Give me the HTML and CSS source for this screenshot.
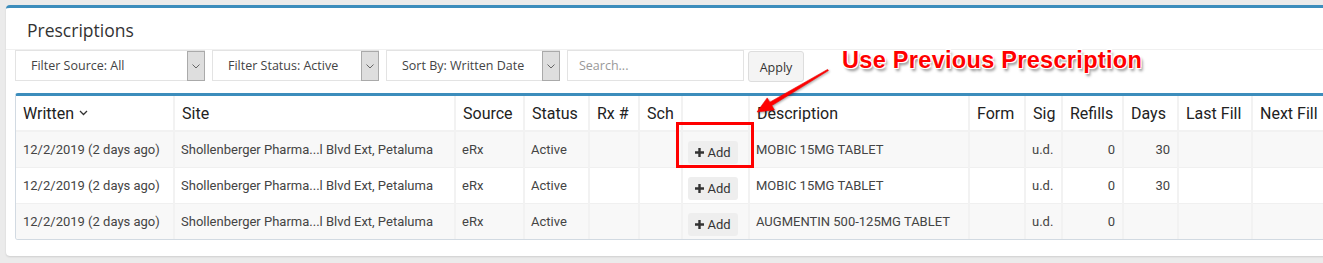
FILE: index.html
```html
<!DOCTYPE html>
<html lang="en">
<head>
  <meta charset="UTF-8">
  <title>Prescriptions</title>
  <link rel="stylesheet" href="styles.css">
</head>
<body>
  <div class="panel">
    <div class="panel-header">
      <h2>Prescriptions</h2>
    </div>

    <div class="toolbar">
      <div class="select select-source">
        <span class="select-text">Filter Source: All</span>
        <span class="select-btn"><svg width="8" height="5" viewBox="0 0 8 5"><path d="M0.5 0.5 L4 4 L7.5 0.5" fill="none" stroke="#666" stroke-width="1"/></svg></span>
      </div>
      <div class="select select-status">
        <span class="select-text">Filter Status: Active</span>
        <span class="select-btn"><svg width="8" height="5" viewBox="0 0 8 5"><path d="M0.5 0.5 L4 4 L7.5 0.5" fill="none" stroke="#666" stroke-width="1"/></svg></span>
      </div>
      <div class="select select-sort">
        <span class="select-text">Sort By: Written Date</span>
        <span class="select-btn"><svg width="8" height="5" viewBox="0 0 8 5"><path d="M0.5 0.5 L4 4 L7.5 0.5" fill="none" stroke="#666" stroke-width="1"/></svg></span>
      </div>
      <div class="search">Search...</div>
      <button class="apply">Apply</button>
    </div>

    <div class="grid">
      <table>
        <colgroup>
          <col style="width:158px"><col style="width:281px"><col style="width:69px"><col style="width:65px">
          <col style="width:50px"><col style="width:43px"><col style="width:67px"><col style="width:220px">
          <col style="width:56px"><col style="width:37px"><col style="width:61px"><col style="width:55px">
          <col style="width:74px"><col style="width:90px">
        </colgroup>
        <thead>
          <tr>
            <th>Written <svg class="sort" width="9" height="6" viewBox="0 0 9 6"><path d="M1 1 L4.5 4.5 L8 1" fill="none" stroke="#333" stroke-width="1.3"/></svg></th>
            <th>Site</th>
            <th>Source</th>
            <th>Status</th>
            <th>Rx #</th>
            <th>Sch</th>
            <th></th>
            <th>Description</th>
            <th>Form</th>
            <th>Sig</th>
            <th>Refills</th>
            <th>Days</th>
            <th>Last Fill</th>
            <th>Next Fill</th>
          </tr>
        </thead>
        <tbody>
          <tr>
            <td>12/2/2019 (2 days ago)</td>
            <td>Shollenberger Pharma...l Blvd Ext, Petaluma</td>
            <td>eRx</td>
            <td>Active</td>
            <td></td>
            <td></td>
            <td class="act"><button class="add"><svg width="9" height="9" viewBox="0 0 9 9"><path d="M3.3 0h2.4v3.3H9v2.4H5.7V9H3.3V5.7H0V3.3h3.3z" fill="#333"/></svg>Add</button></td>
            <td>MOBIC 15MG TABLET</td>
            <td></td>
            <td>u.d.</td>
            <td class="num">0</td>
            <td class="num">30</td>
            <td></td>
            <td></td>
          </tr>
          <tr>
            <td>12/2/2019 (2 days ago)</td>
            <td>Shollenberger Pharma...l Blvd Ext, Petaluma</td>
            <td>eRx</td>
            <td>Active</td>
            <td></td>
            <td></td>
            <td class="act"><button class="add"><svg width="9" height="9" viewBox="0 0 9 9"><path d="M3.3 0h2.4v3.3H9v2.4H5.7V9H3.3V5.7H0V3.3h3.3z" fill="#333"/></svg>Add</button></td>
            <td>MOBIC 15MG TABLET</td>
            <td></td>
            <td>u.d.</td>
            <td class="num">0</td>
            <td class="num">30</td>
            <td></td>
            <td></td>
          </tr>
          <tr>
            <td>12/2/2019 (2 days ago)</td>
            <td>Shollenberger Pharma...l Blvd Ext, Petaluma</td>
            <td>eRx</td>
            <td>Active</td>
            <td></td>
            <td></td>
            <td class="act"><button class="add"><svg width="9" height="9" viewBox="0 0 9 9"><path d="M3.3 0h2.4v3.3H9v2.4H5.7V9H3.3V5.7H0V3.3h3.3z" fill="#333"/></svg>Add</button></td>
            <td>AUGMENTIN 500-125MG TABLET</td>
            <td></td>
            <td>u.d.</td>
            <td class="num">0</td>
            <td class="num"></td>
            <td></td>
            <td></td>
          </tr>
        </tbody>
      </table>
    </div>
  </div>

  <!-- annotation overlay -->
  <div class="callout-text">Use Previous Prescription</div>
  <svg class="callout-arrow" width="85" height="56" viewBox="0 0 85 56">
    <polygon points="7,50 24.4,47.9 21.8,43.6 78.4,8.6 77.6,7.4 19.8,40.2 17.2,35.9" fill="#f00" stroke="#e00" stroke-width="0.6"/>
  </svg>
  <div class="callout-box"></div>
</body>
</html>
```

FILE: styles.css
```css
body {
  margin: 0;
  background: #ebebeb;
  overflow: hidden;
  font-family: "Open Sans", "Noto Sans", sans-serif;
  position: relative;
  height: 263px;
}

.panel {
  margin: 5px 0 0 6px;
  width: 1340px;
  background: white;
  border-top: 3px solid #3c8dbc;
  border-radius: 4px 0 0 4px;
  box-shadow: 0 1px 2px rgba(0,0,0,0.12);
  padding: 0 0 16px 9px;
}

.panel-header {
  height: 42px;
  border-bottom: 1px solid #f0f0f0;
  margin-left: -9px;
  padding-left: 21px;
  box-sizing: border-box;
}

.panel-header h2 {
  margin: 0;
  padding-top: 11px;
  font-size: 17.5px;
  font-weight: 400;
  color: #333;
  line-height: 22px;
}

.toolbar {
  display: flex;
  gap: 7px;
  height: 32px;
}

.select {
  display: flex;
  align-items: stretch;
  border: 1px solid #e3e3e3;
  box-sizing: border-box;
  height: 31px;
}

.select-source { width: 190px; }
.select-status { width: 167px; }
.select-sort { width: 174px; }

.select-text {
  flex: 1;
  padding-left: 15px;
  font-size: 12.5px;
  line-height: 30px;
  color: #444;
}

.select-btn {
  width: 16px;
  background: #dedede;
  border: 1px solid #aaa;
  display: flex;
  align-items: center;
  justify-content: center;
  margin: 0 -1px -1px 0;
}

.search {
  width: 177px;
  height: 31px;
  box-sizing: border-box;
  border: 1px solid #e3e3e3;
  padding-left: 11px;
  font-size: 12.5px;
  line-height: 30px;
  color: #999;
}

.apply {
  margin: 1px 0 0 -3px;
  width: 56px;
  height: 31px;
  background: #f4f4f4;
  border: 1px solid #ddd;
  border-radius: 3px;
  font-family: "Open Sans", "Noto Sans", sans-serif;
  font-size: 12.5px;
  color: #333;
  padding: 1px 0 0;
}

.grid {
  margin-top: 11px;
  border: 1px solid #d2dae2;
  border-top: 3px solid #3c8dbc;
  border-radius: 3px 0 0 3px;
  overflow: hidden;
}

table {
  border-collapse: collapse;
  table-layout: fixed;
  width: 1326px;
  font-family: Roboto, "Liberation Sans", sans-serif;
}

th {
  height: 34px;
  padding: 0 7px;
  text-align: left;
  font-size: 16px;
  font-weight: 400;
  color: #222;
  border-left: 2px solid #f2f2f2;
  border-bottom: 2px solid #f2f2f2;
  white-space: nowrap;
}

th:first-child, td:first-child { border-left: none; }

.sort { margin-left: 1px; vertical-align: 3px; }

td {
  height: 35px;
  padding: 0 5px 0 6px;
  font-size: 13px;
  color: #444;
  border-left: 2px solid #f2f2f2;
  border-top: 1px solid #f0f0f0;
  white-space: nowrap;
  overflow: hidden;
}

td:first-child { padding-left: 7px; }

tbody tr:nth-child(odd) { background: #f8f8f8; }
tbody tr:nth-child(even) { background: white; }

td.num { text-align: right; padding-right: 7px; }

td.act { padding: 0 5px; }

.add {
  display: inline-flex;
  align-items: center;
  gap: 3px;
  height: 23px;
  width: 50px;
  justify-content: center;
  margin-top: 5px;
  background: #eeeeee;
  border: none;
  border-radius: 3px;
  font-family: Roboto, "Liberation Sans", sans-serif;
  font-size: 13px;
  color: #333;
  padding: 0;
}

/* annotation */
.callout-text {
  position: absolute;
  left: 842px;
  top: 47px;
  font-family: "Liberation Sans", Arial, sans-serif;
  font-weight: 700;
  font-size: 23.5px;
  color: #ff0000;
  letter-spacing: 0.3px;
  text-shadow:
    -1px -1px 0 #fff, 1px -1px 0 #fff, -1px 1px 0 #fff, 1px 1px 0 #fff,
    2px 3px 3px rgba(0,0,0,0.45);
}

.callout-arrow {
  position: absolute;
  left: 750px;
  top: 62px;
  filter: drop-shadow(1px 1px 1px rgba(0,0,0,0.35));
}

.callout-box {
  position: absolute;
  left: 676px;
  top: 122px;
  width: 72px;
  height: 40px;
  border: 3px solid #ff0000;
}
```
